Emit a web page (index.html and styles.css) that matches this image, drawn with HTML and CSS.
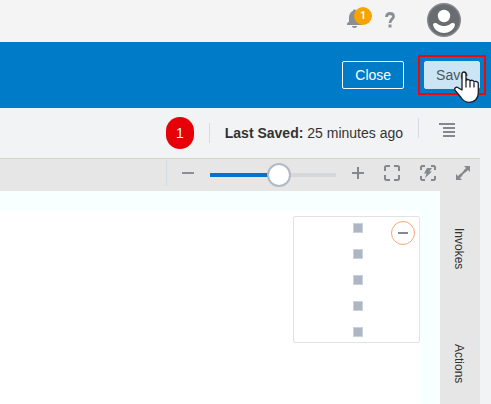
FILE: index.html
```html
<!DOCTYPE html>
<html lang="en">
<head>
<meta charset="utf-8">
<title>Integration editor</title>
<link rel="stylesheet" href="styles.css">
</head>
<body>
<header class="topbar">
  <button class="icon-btn bell" aria-label="Notifications">
    <svg width="25" height="22" viewBox="0 0 25 22"><path fill="#8b8f93" d="M0 18v-1.500l2-2V11c0-4 2-6.500 4-7C6 3 6.500 2.500 7.500 2.500S9 3 9 4c3 .5 4 3 4 7v3.500l2 2V18zM5 19h5c0 1.300-1 2-2.500 2S5 20.300 5 19z"/></svg>
    <span class="count">1</span>
  </button>
  <button class="icon-btn help" aria-label="Help"><svg width="10" height="16" viewBox="0 0 10 16"><path d="M1.500 5C1.500 2.700 3 1.500 5 1.500s3.500 1.100 3.500 3C8.500 7 5 7.200 5 11" fill="none" stroke="#8b8f93" stroke-width="2.800"/><rect x="3.500" y="12.500" width="3" height="3" fill="#8b8f93"/></svg></button>
  <button class="icon-btn" aria-label="Account">
    <svg width="34" height="34" viewBox="0 0 34 34"><circle cx="17" cy="17" r="16.300" fill="#696c70" stroke="#85888b" stroke-width="1.400"/><circle cx="17" cy="13" r="6.200" fill="#fff"/><path fill="#fff" d="M8 20c1.500 0 2 .5 3 1.200 3.500 2.400 8.500 2.400 12 0 1-.7 1.500-1.200 3-1.200 1.700 0 2.300 1.500 1.700 3C26.200 27 22 30 17 30S7.800 27 6.300 23C5.700 21.500 6.300 20 8 20z"/></svg>
  </button>
</header>
<div class="actionbar">
  <button class="btn">Close</button>
  <div class="save-wrap">
    <button class="btn save">Save</button>
    <span class="highlight"></span>
    <svg class="pointer" width="26" height="32" viewBox="0 0 26 32"><path fill="#fff" stroke="#151a28" stroke-width="1.300" stroke-linejoin="round" d="M8 19V3.300C8 .2 12 .2 12 3.300V9.500c1-1.500 3.700-1.200 4 .5 1.200-1.300 3.800-.8 4 .8 1.700-1 4.300-.2 4.300 2V22c0 5.500-3.800 9.300-9 9.300-4 0-6.300-1.800-8.300-4.800L1.200 19.500c-1.500-2.200 1-4.200 3-2.800z"/><path d="M12 9.500v7M16 10.500v6M20 11.500v5" stroke="#151a28" stroke-width="1.200"/></svg>
  </div>
</div>
<div class="status">
  <span class="step">1</span>
  <span class="rule"></span>
  <p class="saved"><strong>Last Saved:</strong> 25 minutes ago</p>
  <span class="rule second"></span>
  <button class="icon-btn" aria-label="Menu"><svg width="16" height="14" viewBox="0 0 16 14"><path fill="#85898e" d="M0 0h16v2H0zM4 4h12v2H4zM4 8h12v2H4zM4 12h12v2H4z"/></svg></button>
</div>
<main class="editor">
  <div class="toolbar">
    <button class="icon-btn zoom-out" aria-label="Zoom out"><svg width="12" height="12" viewBox="0 0 12 12"><path fill="#8b8f93" d="M0 5h12v2H0z"/></svg></button>
    <input class="zoom" type="range" min="0" max="100" value="56" aria-label="Zoom">
    <div class="tools">
      <button class="icon-btn" aria-label="Zoom in"><svg width="12" height="12" viewBox="0 0 12 12"><path fill="#85898d" d="M5 0h2v5h5v2H7v5H5V7H0V5h5z"/></svg></button>
      <button class="icon-btn" aria-label="Fit"><svg width="16" height="16" viewBox="0 0 16 16"><path fill="none" stroke="#85898d" stroke-width="2" d="M1 6V2l1-1h4M10 1h4l1 1v4M15 10v4l-1 1h-4M6 15H2l-1-1v-4"/></svg></button>
      <button class="icon-btn" aria-label="Auto fit"><svg width="16" height="16" viewBox="0 0 16 16"><path fill="none" stroke="#85898d" stroke-width="2" d="M1 5V2l1-1h3M11 1h3l1 1v3M15 11v3l-1 1h-3M5 15H2l-1-1v-3"/><path fill="#85898d" d="M7 3h5L9.500 6.500H12L5 13l1.500-4.500H4z"/></svg></button>
      <button class="icon-btn" aria-label="Expand"><svg width="14" height="14" viewBox="0 0 14 14"><path fill="#85898d" d="M8 0h6v6l-2-2-2.500 2.500-2-2L10 2zM0 8l2 2 2.500-2.500 2 2L4 12l2 2H0z"/><path d="M4 10l6-6" stroke="#85898d" stroke-width="2"/></svg></button>
    </div>
  </div>
  <div class="workspace">
    <div class="canvas">
      <div class="sheet">
        <div class="minimap">
          <div class="nodes"><i></i><i></i><i></i><i></i><i></i></div>
          <button class="collapse" aria-label="Collapse"><svg width="10" height="2" viewBox="0 0 10 2"><path fill="#85898d" d="M0 0h10v2H0z"/></svg></button>
        </div>
      </div>
    </div>
    <nav class="tabs"><a href="#invokes">Invokes</a><a href="#actions">Actions</a></nav>
  </div>
</main>
</body>
</html>
```
FILE: styles.css
```css
* { box-sizing: border-box; }
body {
  margin: 0;
  min-height: 100vh;
  display: flex;
  flex-direction: column;
  overflow: hidden;
  background: #f1f3f5;
  color: #333;
  font: 14px/20px "Liberation Sans", Arial, sans-serif;
}
button { font: inherit; cursor: pointer; }
svg { display: block; }
.icon-btn { padding: 0; border: 0; background: none; flex: none; }
.topbar {
  display: flex;
  justify-content: flex-end;
  align-items: center;
  height: 42px;
  padding: 0 30px 2px 0;
  background: #f4f4f4;
}
.bell { position: relative; margin: 0 13px 4px 0; }
.count {
  position: absolute;
  top: 0;
  right: 0;
  width: 18px;
  height: 18px;
  border-radius: 50%;
  background: #f6a500;
  color: #fff;
  font: bold 10px/18px Roboto, sans-serif;
}
.help { margin-right: 32px; }
.actionbar {
  display: flex;
  justify-content: flex-end;
  align-items: center;
  gap: 20px;
  height: 66px;
  padding-right: 11px;
  background: #007bc8;
}
.btn {
  display: block;
  height: 28px;
  padding: 0 12px;
  border: 1px solid #fff;
  border-radius: 2px;
  background: transparent;
  color: #fff;
  line-height: 26px;
}
.save { padding: 0 11px; border-color: #cce5f4; background: #cce5f4; color: #4a5661; }
.save-wrap { position: relative; }
.highlight { position: absolute; inset: -6px; border: 2px solid #f00808; }
.pointer { position: absolute; right: 0; top: 10px; }
.status {
  display: flex;
  justify-content: flex-end;
  align-items: center;
  height: 50px;
  padding-right: 36px;
}
.step {
  width: 28px;
  height: 32px;
  border-radius: 14px;
  background: #e60008;
  color: #fff;
  line-height: 32px;
  text-align: center;
}
.rule { width: 1px; height: 20px; margin: 0 15px; background: #d3dde4; }
.saved { margin: 0; white-space: nowrap; }
.second { margin: 0 20px 10px 15px; }
.status .icon-btn { margin-bottom: 6px; }
.editor { flex: 1; display: flex; flex-direction: column; margin-right: 11px; }
.toolbar {
  display: flex;
  justify-content: flex-end;
  align-items: center;
  height: 33px;
  padding-right: 10px;
  border-top: 1px solid #d5d7c6;
  background: #e6e6e6;
}
.zoom-out { height: 26px; padding: 0 0 0 15px; margin-bottom: 4px; border-left: 1px solid #d1dbe2; }
.zoom {
  appearance: none;
  flex: none;
  width: 126px;
  height: 24px;
  margin: 0 16px;
  background: linear-gradient(90deg, #0572ce 55%, #d5d7d9 55%) center / 100% 4px no-repeat;
}
.zoom::-webkit-slider-thumb {
  appearance: none;
  width: 24px;
  height: 24px;
  border: 2px solid #b0bac5;
  border-radius: 50%;
  background: #fff;
}
.tools { display: flex; align-items: center; gap: 20px; margin-bottom: 4px; }
.workspace { flex: 1; display: flex; }
.canvas { flex: 1; padding: 20px 20px 0 0; background: #f8ffff; }
.sheet {
  display: flex;
  justify-content: flex-end;
  align-items: flex-start;
  height: 100%;
  padding-top: 5px;
  background: #fff;
}
.minimap {
  position: relative;
  width: 127px;
  padding: 6px 0 4px 59px;
  border: 1px solid #e0e3e6;
  border-radius: 2px;
}
.nodes { display: grid; gap: 16px; padding-bottom: 1px; }
.nodes i { width: 10px; height: 10px; border: 1px solid #cbd2da; background: #adb7c3; }
.collapse {
  position: absolute;
  top: 4px;
  right: 4px;
  display: grid;
  place-items: center;
  width: 24px;
  height: 24px;
  padding: 0;
  border: 1px solid #f3a878;
  border-radius: 50%;
  background: #fff;
}
.tabs {
  display: flex;
  flex-direction: column;
  align-items: center;
  gap: 75px;
  width: 40px;
  padding: 37px 3px 0 0;
  background: #e6e6e6;
}
.tabs a {
  writing-mode: vertical-rl;
  color: #333;
  font-size: 12px;
  text-decoration: none;
}
```
